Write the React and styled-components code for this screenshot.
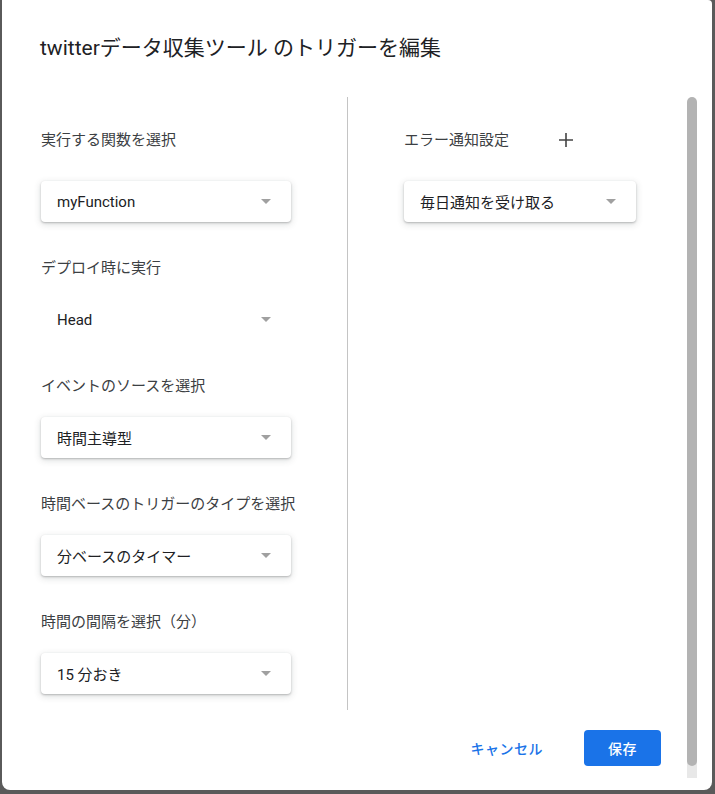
import styled, { createGlobalStyle } from 'styled-components';

const GlobalStyle = createGlobalStyle`
  html, body {
    margin: 0;
    padding: 0;
    background-color: #5a5a5a;
  }
  body {
    font-family: Roboto, "Noto Sans CJK JP", sans-serif;
  }
`;

const Dialog = styled.div`
  width: 710px;
  height: 790px;
  margin-left: 2px;
  background-color: #fff;
  border-radius: 0 4px 8px 8px;
  display: flex;
  flex-direction: column;
  box-sizing: border-box;
  padding-bottom: 12px;
`;

const Title = styled.h2`
  margin: 34px 0 0 38px;
  font-size: 21px;
  font-weight: 400;
  line-height: 28px;
  color: #202124;
`;

const Body = styled.div`
  flex: 1;
  display: flex;
  margin-top: 35px;
  min-height: 0;
`;

const Main = styled.div`
  flex: 1;
  display: flex;
  flex-direction: column;
`;

const Columns = styled.div`
  display: flex;
  height: 613px;
`;

const Column = styled.div`
  box-sizing: border-box;
  width: ${(p) => p.$width || 'auto'};
  flex: ${(p) => (p.$width ? 'none' : 1)};
  padding: 33px 0 0 ${(p) => p.$pad}px;
  border-right: ${(p) => (p.$divider ? '1px solid #c4c4c4' : 'none')};
`;

const Field = styled.div`
  margin-bottom: 36px;
`;

const LabelRow = styled.div`
  display: flex;
  align-items: center;
  height: 20px;
  margin-bottom: ${(p) => p.$gap || 21}px;
`;

const Label = styled.span`
  font-size: 15px;
  line-height: 20px;
  color: #3c4043;
`;

const AddButton = styled.button`
  margin-left: 50px;
  width: 14px;
  height: 14px;
  padding: 0;
  border: none;
  background: none;
  display: flex;
  color: #444;
`;

const Dropdown = styled.div`
  box-sizing: border-box;
  width: ${(p) => p.$width}px;
  height: 41px;
  display: flex;
  align-items: center;
  justify-content: space-between;
  padding: 0 20px 0 16px;
  border-radius: 4px;
  background-color: ${(p) => (p.$flat ? 'transparent' : '#fff')};
  box-shadow: ${(p) =>
    p.$flat
      ? 'none'
      : '0 1px 2px rgba(60, 64, 67, 0.3), 0 2px 6px 1px rgba(60, 64, 67, 0.15)'};
  font-size: 15px;
  color: #202124;
`;

const Arrow = styled.span`
  width: 0;
  height: 0;
  border-left: 5.5px solid transparent;
  border-right: 5.5px solid transparent;
  border-top: 5.5px solid #a0a0a0;
`;

const Footer = styled.div`
  display: flex;
  justify-content: flex-end;
  align-items: center;
  padding: 20px 26px 0 0;
`;

const TextButton = styled.button`
  height: 36px;
  padding: 0 8px;
  margin-right: 33px;
  border: none;
  background: none;
  font-family: inherit;
  font-size: 14px;
  font-weight: 500;
  color: #1a73e8;
  letter-spacing: 0.5px;
`;

const PrimaryButton = styled.button`
  height: 36px;
  padding: 0 24px;
  border: none;
  border-radius: 4px;
  background-color: #1a73e8;
  font-family: inherit;
  font-size: 14px;
  font-weight: 500;
  color: #fff;
  letter-spacing: 0.5px;
`;

const Scrollbar = styled.div`
  width: 10px;
  margin-right: 15px;
  display: flex;
  flex-direction: column;
  background: linear-gradient(#fff 0 50%, #e8e8e8 50%);
`;

const Thumb = styled.div`
  flex: 1;
  border-radius: 5px;
  background-color: #b3b3b3;
`;

const TrackEnd = styled.div`
  height: 12px;
`;

const leftFields = [
  { label: '実行する関数を選択', value: 'myFunction', gap: 31 },
  { label: 'デプロイ時に実行', value: 'Head', flat: true },
  { label: 'イベントのソースを選択', value: '時間主導型' },
  { label: '時間ベースのトリガーのタイプを選択', value: '分ベースのタイマー' },
  { label: '時間の間隔を選択（分）', value: '15 分おき' },
];

const Select = ({ value, width, flat }) => (
  <Dropdown $width={width} $flat={flat}>
    <span>{value}</span>
    <Arrow />
  </Dropdown>
);

const App = () => (
  <>
    <GlobalStyle />
    <Dialog>
      <Title>twitterデータ収集ツール のトリガーを編集</Title>
      <Body>
        <Main>
          <Columns>
            <Column $width="346px" $pad={39} $divider>
              {leftFields.map((f) => (
                <Field key={f.label}>
                  <LabelRow $gap={f.gap}>
                    <Label>{f.label}</Label>
                  </LabelRow>
                  <Select value={f.value} width={250} flat={f.flat} />
                </Field>
              ))}
            </Column>
            <Column $pad={56}>
              <Field>
                <LabelRow $gap={31}>
                  <Label>エラー通知設定</Label>
                  <AddButton aria-label="追加">
                    <svg width="14" height="14" viewBox="0 0 14 14">
                      <path d="M7 0v14M0 7h14" stroke="currentColor" strokeWidth="1.6" />
                    </svg>
                  </AddButton>
                </LabelRow>
                <Select value="毎日通知を受け取る" width={232} />
              </Field>
            </Column>
          </Columns>
          <Footer>
            <TextButton>キャンセル</TextButton>
            <PrimaryButton>保存</PrimaryButton>
          </Footer>
        </Main>
        <Scrollbar>
          <Thumb />
          <TrackEnd />
        </Scrollbar>
      </Body>
    </Dialog>
  </>
);

export default App;
